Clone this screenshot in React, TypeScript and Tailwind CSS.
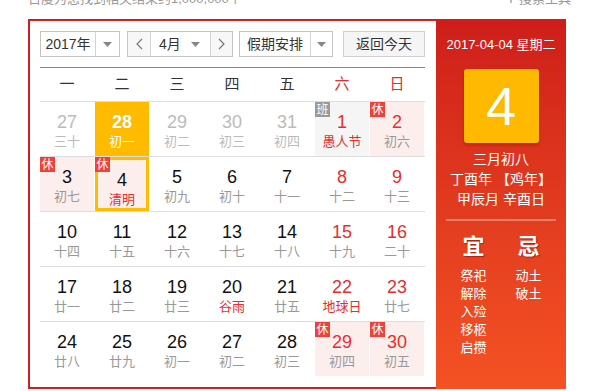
import React from "react";

type Day = {
  n: number;
  l: string;
  prev?: boolean;
  red?: boolean;
  redL?: boolean;
  badge?: "休" | "班";
  today?: boolean;
  hl?: boolean;
};

const rows: Day[][] = [
  [
    { n: 27, l: "三十", prev: true },
    { n: 28, l: "初一", prev: true, hl: true },
    { n: 29, l: "初二", prev: true },
    { n: 30, l: "初三", prev: true },
    { n: 31, l: "初四", prev: true },
    { n: 1, l: "愚人节", red: true, redL: true, badge: "班" },
    { n: 2, l: "初六", red: true, badge: "休" },
  ],
  [
    { n: 3, l: "初七", badge: "休" },
    { n: 4, l: "清明", redL: true, badge: "休", today: true },
    { n: 5, l: "初九" },
    { n: 6, l: "初十" },
    { n: 7, l: "十一" },
    { n: 8, l: "十二", red: true },
    { n: 9, l: "十三", red: true },
  ],
  [
    { n: 10, l: "十四" },
    { n: 11, l: "十五" },
    { n: 12, l: "十六" },
    { n: 13, l: "十七" },
    { n: 14, l: "十八" },
    { n: 15, l: "十九", red: true },
    { n: 16, l: "二十", red: true },
  ],
  [
    { n: 17, l: "廿一" },
    { n: 18, l: "廿二" },
    { n: 19, l: "廿三" },
    { n: 20, l: "谷雨", redL: true },
    { n: 21, l: "廿五" },
    { n: 22, l: "地球日", red: true, redL: true },
    { n: 23, l: "廿七", red: true },
  ],
  [
    { n: 24, l: "廿八" },
    { n: 25, l: "廿九" },
    { n: 26, l: "初一" },
    { n: 27, l: "初二" },
    { n: 28, l: "初三" },
    { n: 29, l: "初四", red: true, badge: "休" },
    { n: 30, l: "初五", red: true, badge: "休" },
  ],
];

const Caret = () => (
  <svg width="9" height="5" viewBox="0 0 9 5">
    <path d="M0 0h9L4.5 5z" fill="#888" />
  </svg>
);

const Chevron = ({ dir }: { dir: "l" | "r" }) => (
  <svg width="7" height="12" viewBox="0 0 7 12">
    <path
      d={dir === "l" ? "M6 1L1 6l5 5" : "M1 1l5 5-5 5"}
      stroke="#777"
      strokeWidth="1.2"
      fill="none"
    />
  </svg>
);

const Cell = ({ d }: { d: Day }) => {
  let bg = "bg-white";
  if (d.hl) bg = "bg-[#ffbb00]";
  else if (d.badge === "休") bg = "bg-[#fdeeee]";
  else if (d.badge === "班") bg = "bg-[#f5f5f5]";

  let numColor = "text-[#111]";
  let lunarColor = "text-[#999]";
  if (d.prev) {
    numColor = "text-[#bbb]";
    lunarColor = "text-[#bbb]";
  }
  if (d.red) numColor = "text-[#e62e2e]";
  if (d.redL) lunarColor = "text-[#e62e2e]";
  if (d.hl) {
    numColor = "text-white";
    lunarColor = "text-white";
  }

  return (
    <div
      className={`relative flex h-[54px] flex-col items-center pt-[9px] ${bg} ${
        d.today ? "border-[3px] border-[#ffbb00] pt-[6px]" : ""
      }`}
    >
      {d.badge && (
        <span
          className={`absolute flex h-[15px] w-[15px] items-center justify-center text-[12px] leading-none text-white ${
            d.today ? "-left-[3px] -top-[3px]" : "left-0 top-0"
          } ${d.badge === "休" ? "bg-[#f0403a]" : "bg-[#9a9a9a]"}`}
        >
          {d.badge}
        </span>
      )}
      <span className={`text-[18px] leading-[22px] ${numColor} ${d.hl ? "font-bold" : ""}`}>{d.n}</span>
      <span className={`text-[13px] leading-[18px] ${lunarColor}`}>{d.l}</span>
    </div>
  );
};

export default function App() {
  const font = "font-['Liberation_Sans','Noto_Sans_CJK_SC',sans-serif]";
  return (
    <div className={`h-[391px] w-[612px] overflow-hidden bg-white ${font}`}>
      <div className="flex h-[19px] items-start justify-between overflow-hidden pl-[28px] pr-[41px] text-[13px] text-[#999]">
        <span className="-mt-[9px] leading-[16px]">百度为您找到相关结果约1,000,000个</span>
        <span className="-mt-[9px] flex items-center gap-1 leading-[16px]">
          <svg width="8" height="8" viewBox="0 0 8 8">
            <path d="M0 0h8L5 4v4H3V4z" fill="#bbb" />
          </svg>
          搜索工具
        </span>
      </div>

      <div className="ml-[28px] flex h-[370px] w-[538px]">
        {/* calendar */}
        <div className="flex w-[408px] flex-col border-y-2 border-l-2 border-[#d21f1b] pl-[10px] pt-[10px]">
          <div className="flex h-[26px] items-stretch text-[14px] text-[#333]">
            <div className="flex w-[80px] border border-[#c4c4c4]">
              <span className="flex flex-1 items-center justify-center">2017年</span>
              <span className="flex w-[24px] items-center justify-center border-l border-[#d4d4d4]">
                <Caret />
              </span>
            </div>
            <div className="ml-[7px] flex w-[106px] border border-[#c4c4c4]">
              <span className="flex w-[23px] items-center justify-center border-r border-[#d4d4d4] bg-[#f7f7f7]">
                <Chevron dir="l" />
              </span>
              <span className="flex flex-1 items-center justify-between pl-[8px] pr-[10px]">
                4月
                <Caret />
              </span>
              <span className="flex w-[22px] items-center justify-center border-l border-[#d4d4d4] bg-[#f7f7f7]">
                <Chevron dir="r" />
              </span>
            </div>
            <div className="ml-[6px] flex w-[94px] border border-[#c4c4c4]">
              <span className="flex flex-1 items-center justify-center">假期安排</span>
              <span className="flex w-[22px] items-center justify-center border-l border-[#d4d4d4]">
                <Caret />
              </span>
            </div>
            <button className="ml-[10px] flex w-[82px] items-center justify-center border border-[#d0d0d0] bg-[#f5f5f5] text-[14px] text-[#333]">
              返回今天
            </button>
          </div>

          <div className="mt-[10px] w-[385px] border-t border-[#f25c4c]" />

          <div className="grid h-[33px] w-[385px] grid-cols-[repeat(7,54px)] gap-x-px text-[15px] text-[#333]">
            {["一", "二", "三", "四", "五", "六", "日"].map((w, i) => (
              <div
                key={w}
                className={`flex items-center justify-center ${i > 4 ? "text-[#e62e2e]" : ""}`}
              >
                {w}
              </div>
            ))}
          </div>

          <div className="w-[385px] border-t border-[#dddddd]">
            {rows.map((r, i) => (
              <div
                key={i}
                className={`grid grid-cols-[repeat(7,54px)] gap-x-px ${
                  i < rows.length - 1 ? "border-b border-[#dddddd]" : ""
                }`}
              >
                {r.map((d, j) => (
                  <Cell key={j} d={d} />
                ))}
              </div>
            ))}
          </div>
        </div>

        {/* side panel */}
        <div className="flex w-[130px] flex-col items-center bg-gradient-to-b from-[#ce1d1a] to-[#f45224] pt-[18px] text-white">
          <div className="text-[13px] leading-[16px]">2017-04-04 星期二</div>
          <div className="mt-[16px] flex h-[74px] w-[75px] items-center justify-center rounded-[3px] bg-[#ffba00] text-[54px] leading-none shadow-[0_2px_3px_rgba(120,0,0,0.35)]">
            4
          </div>
          <div className="mt-[6px] flex flex-col items-center text-[14px] leading-[20px]">
            <span>三月初八</span>
            <span>丁酉年 【鸡年】</span>
            <span>甲辰月 辛酉日</span>
          </div>
          <div className="mt-[10px] h-[2px] w-[110px] bg-[#f0806a]" />
          <div className="mt-[13px] flex">
            <div className="flex w-[55px] flex-col items-center">
              <span className="text-[22px] font-bold leading-[26px] [text-shadow:1px_1px_1px_rgba(120,0,0,0.5)]">
                宜
              </span>
              <div className="mt-[7px] flex flex-col text-[13px] leading-[18px]">
                <span>祭祀</span>
                <span>解除</span>
                <span>入殓</span>
                <span>移柩</span>
                <span>启攒</span>
              </div>
            </div>
            <div className="flex w-[55px] flex-col items-center">
              <span className="text-[22px] font-bold leading-[26px] [text-shadow:1px_1px_1px_rgba(120,0,0,0.5)]">
                忌
              </span>
              <div className="mt-[7px] flex flex-col text-[13px] leading-[18px]">
                <span>动土</span>
                <span>破土</span>
              </div>
            </div>
          </div>
        </div>
      </div>
    </div>
  );
}
